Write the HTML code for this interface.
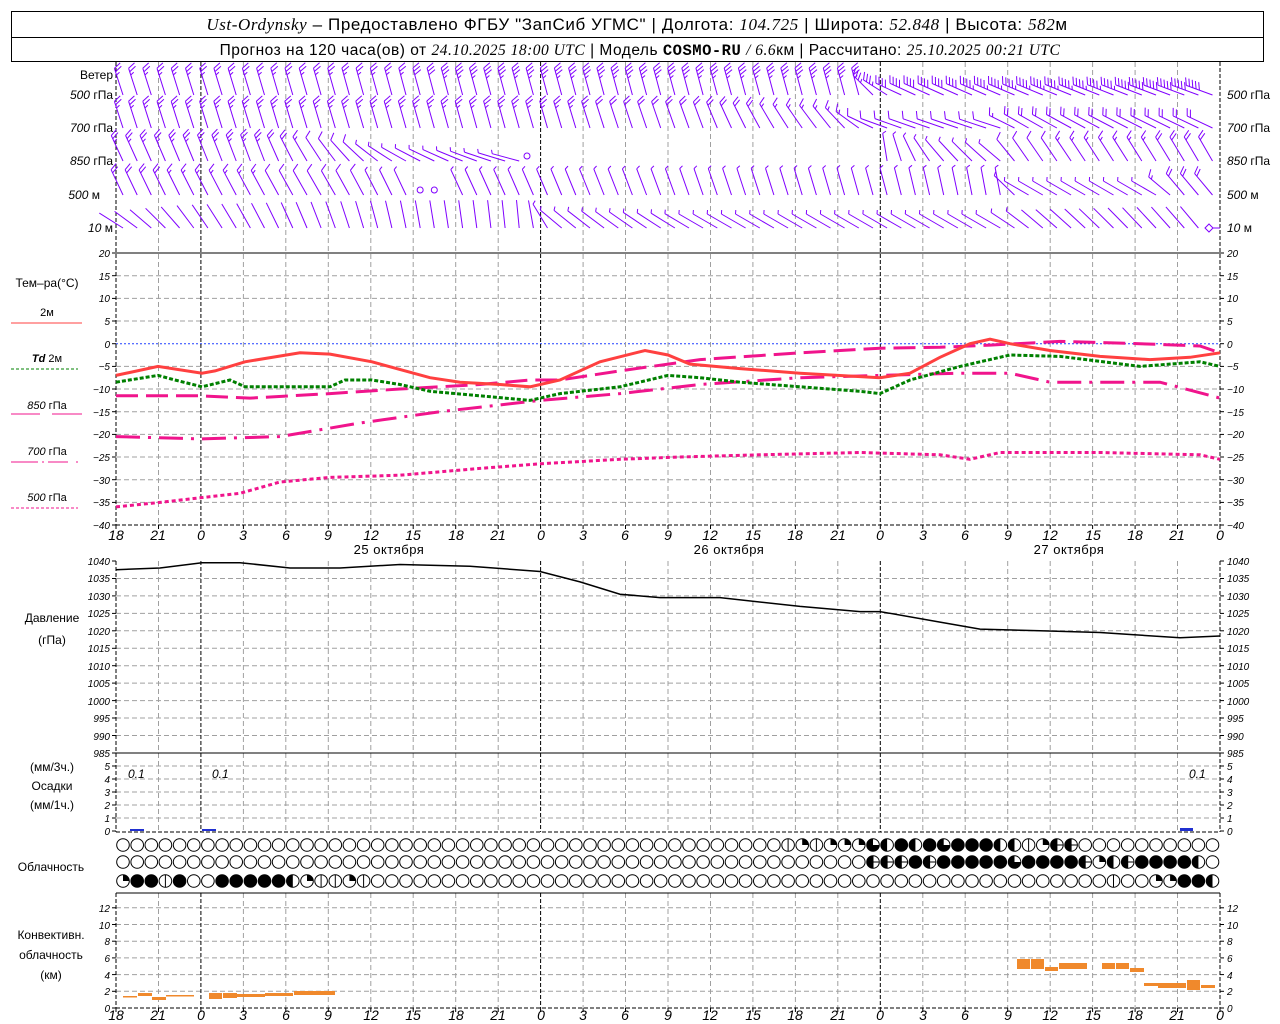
<!DOCTYPE html>
<html><head><meta charset="utf-8">
<style>
html,body{margin:0;padding:0;background:#fff;}
svg{display:block;font-family:"Liberation Sans",sans-serif;}
.ax{font-size:10px;font-style:italic;fill:#000;}
.lb{font-size:12px;fill:#000;}
.it{font-family:"Liberation Serif",serif;font-style:italic;}
</style></head>
<body>
<svg id="s" width="1280" height="1024" viewBox="0 0 1280 1024" xmlns="http://www.w3.org/2000/svg">
<rect x="0" y="0" width="1280" height="1024" fill="#fff"/>
<rect x="11.5" y="11.5" width="1252" height="50" fill="none" stroke="#000"/>
<line x1="11" y1="37.5" x2="1264" y2="37.5" stroke="#000"/>
<text x="637" y="30" text-anchor="middle" font-size="17" letter-spacing="0.6"><tspan class="it">Ust-Ordynsky</tspan> – Предоставлено ФГБУ "ЗапСиб УГМС" | Долгота: <tspan class="it">104.725</tspan> | Широта: <tspan class="it">52.848</tspan> | Высота: <tspan class="it">582</tspan>м</text>
<text x="640" y="55" text-anchor="middle" font-size="15.5" letter-spacing="0.5">Прогноз на 120 часа(ов) от <tspan class="it">24.10.2025 18:00 UTC</tspan> | Модель <tspan font-family="Liberation Mono,monospace" font-weight="bold">COSMO-RU</tspan> <tspan class="it">/ 6.6</tspan>км | Рассчитано: <tspan class="it">25.10.2025 00:21 UTC</tspan></text>

<g id="g"></g>

<g class="lb" font-size="11">
<text x="113" y="79" text-anchor="end" font-size="12">Ветер</text>
<text x="113" y="99" text-anchor="end"><tspan font-style="italic">500</tspan> гПа</text>
<text x="113" y="132" text-anchor="end"><tspan font-style="italic">700</tspan> гПа</text>
<text x="113" y="165" text-anchor="end"><tspan font-style="italic">850</tspan> гПа</text>
<text x="100" y="199" text-anchor="end"><tspan font-style="italic">500</tspan> м</text>
<text x="113" y="232" text-anchor="end"><tspan font-style="italic">10</tspan>   м</text>
<text x="1227" y="99"><tspan font-style="italic">500</tspan> гПа</text>
<text x="1227" y="132"><tspan font-style="italic">700</tspan> гПа</text>
<text x="1227" y="165"><tspan font-style="italic">850</tspan> гПа</text>
<text x="1227" y="199"><tspan font-style="italic">500</tspan> м</text>
<text x="1227" y="232"><tspan font-style="italic">10</tspan>   м</text>
</g>
<g class="lb">
<text x="47" y="287" text-anchor="middle">Тем–ра(°C)</text>
<text x="47" y="316" text-anchor="middle" font-size="11">2м</text>
<text x="47" y="362" text-anchor="middle" font-size="11"><tspan font-style="italic" font-weight="bold">Td</tspan>  2м</text>
<text x="47" y="409" text-anchor="middle" font-size="11"><tspan font-style="italic">850</tspan>  гПа</text>
<text x="47" y="455" text-anchor="middle" font-size="11"><tspan font-style="italic">700</tspan> гПа</text>
<text x="47" y="501" text-anchor="middle" font-size="11"><tspan font-style="italic">500</tspan> гПа</text>
<text x="52" y="622" text-anchor="middle">Давление</text>
<text x="52" y="644" text-anchor="middle">(гПа)</text>
<text x="52" y="771" text-anchor="middle">(мм/3ч.)</text>
<text x="52" y="790" text-anchor="middle">Осадки</text>
<text x="52" y="809" text-anchor="middle">(мм/1ч.)</text>
<text x="51" y="871" text-anchor="middle">Облачность</text>
<text x="51" y="939" text-anchor="middle">Конвективн.</text>
<text x="51" y="959" text-anchor="middle">облачность</text>
<text x="51" y="979" text-anchor="middle">(км)</text>
</g>
<g font-size="12" font-style="italic">
<text x="128" y="778">0.1</text><text x="212" y="778">0.1</text><text x="1189" y="778">0.1</text>
</g>
<line x1="11" y1="323" x2="82" y2="323" stroke="#ff4040" stroke-width="1"/>
<line x1="11" y1="369" x2="78" y2="369" stroke="#008000" stroke-dasharray="3,2"/>
<line x1="11" y1="414" x2="40" y2="414" stroke="#f0148c"/><line x1="52" y1="414" x2="82" y2="414" stroke="#f0148c"/>
<line x1="11" y1="462" x2="38" y2="462" stroke="#f0148c"/><line x1="42" y1="462" x2="44" y2="462" stroke="#f0148c"/><line x1="48" y1="462" x2="68" y2="462" stroke="#f0148c"/><line x1="76" y1="462" x2="78" y2="462" stroke="#f0148c"/>
<line x1="11" y1="508" x2="78" y2="508" stroke="#f0148c" stroke-dasharray="3,2"/>

<g class="ax" text-anchor="end">
<text x="110" y="257">20</text><text x="110" y="280">15</text><text x="110" y="302">10</text><text x="110" y="325">5</text><text x="110" y="348">0</text><text x="110" y="370">−5</text><text x="110" y="393">−10</text><text x="110" y="416">−15</text><text x="110" y="438">−20</text><text x="110" y="461">−25</text><text x="110" y="484">−30</text><text x="110" y="506">−35</text><text x="110" y="529">−40</text>
<text x="110" y="565">1040</text><text x="110" y="582">1035</text><text x="110" y="600">1030</text><text x="110" y="617">1025</text><text x="110" y="635">1020</text><text x="110" y="652">1015</text><text x="110" y="670">1010</text><text x="110" y="687">1005</text><text x="110" y="705">1000</text><text x="110" y="722">995</text><text x="110" y="740">990</text><text x="110" y="757">985</text>
<text x="110" y="770">5</text><text x="110" y="783">4</text><text x="110" y="796">3</text><text x="110" y="809">2</text><text x="110" y="822">1</text><text x="110" y="835">0</text>
<text x="110" y="912">12</text><text x="110" y="929">10</text><text x="110" y="945">8</text><text x="110" y="962">6</text><text x="110" y="979">4</text><text x="110" y="995">2</text><text x="110" y="1012">0</text>
</g>
<g class="ax">
<text x="1227" y="257">20</text><text x="1227" y="280">15</text><text x="1227" y="302">10</text><text x="1227" y="325">5</text><text x="1227" y="348">0</text><text x="1227" y="370">−5</text><text x="1227" y="393">−10</text><text x="1227" y="416">−15</text><text x="1227" y="438">−20</text><text x="1227" y="461">−25</text><text x="1227" y="484">−30</text><text x="1227" y="506">−35</text><text x="1227" y="529">−40</text>
<text x="1227" y="565">1040</text><text x="1227" y="582">1035</text><text x="1227" y="600">1030</text><text x="1227" y="617">1025</text><text x="1227" y="635">1020</text><text x="1227" y="652">1015</text><text x="1227" y="670">1010</text><text x="1227" y="687">1005</text><text x="1227" y="705">1000</text><text x="1227" y="722">995</text><text x="1227" y="740">990</text><text x="1227" y="757">985</text>
<text x="1227" y="770">5</text><text x="1227" y="783">4</text><text x="1227" y="796">3</text><text x="1227" y="809">2</text><text x="1227" y="822">1</text><text x="1227" y="835">0</text>
<text x="1227" y="912">12</text><text x="1227" y="929">10</text><text x="1227" y="945">8</text><text x="1227" y="962">6</text><text x="1227" y="979">4</text><text x="1227" y="995">2</text><text x="1227" y="1012">0</text>
</g>
<g font-size="14" font-style="italic" text-anchor="middle">
<text x="116" y="540">18</text><text x="158" y="540">21</text><text x="201" y="540">0</text><text x="243" y="540">3</text><text x="286" y="540">6</text><text x="328" y="540">9</text><text x="371" y="540">12</text><text x="413" y="540">15</text><text x="456" y="540">18</text><text x="498" y="540">21</text><text x="541" y="540">0</text><text x="583" y="540">3</text><text x="625" y="540">6</text><text x="668" y="540">9</text><text x="710" y="540">12</text><text x="753" y="540">15</text><text x="795" y="540">18</text><text x="838" y="540">21</text><text x="880" y="540">0</text><text x="923" y="540">3</text><text x="965" y="540">6</text><text x="1008" y="540">9</text><text x="1050" y="540">12</text><text x="1093" y="540">15</text><text x="1135" y="540">18</text><text x="1177" y="540">21</text><text x="1220" y="540">0</text>
<text x="116" y="1020">18</text><text x="158" y="1020">21</text><text x="201" y="1020">0</text><text x="243" y="1020">3</text><text x="286" y="1020">6</text><text x="328" y="1020">9</text><text x="371" y="1020">12</text><text x="413" y="1020">15</text><text x="456" y="1020">18</text><text x="498" y="1020">21</text><text x="541" y="1020">0</text><text x="583" y="1020">3</text><text x="625" y="1020">6</text><text x="668" y="1020">9</text><text x="710" y="1020">12</text><text x="753" y="1020">15</text><text x="795" y="1020">18</text><text x="838" y="1020">21</text><text x="880" y="1020">0</text><text x="923" y="1020">3</text><text x="965" y="1020">6</text><text x="1008" y="1020">9</text><text x="1050" y="1020">12</text><text x="1093" y="1020">15</text><text x="1135" y="1020">18</text><text x="1177" y="1020">21</text><text x="1220" y="1020">0</text>
</g>
<g font-size="13" text-anchor="middle" letter-spacing="0.5">
<text x="389" y="554">25 октября</text><text x="729" y="554">26 октября</text><text x="1069" y="554">27 октября</text>
</g>
</svg>
<script>
var G=document.getElementById("g"),out="";
function X(h){return 116+h*1104/78;}
function L(x1,y1,x2,y2,st){out+='<line x1="'+(+x1).toFixed(1)+'" y1="'+(+y1).toFixed(1)+'" x2="'+(+x2).toFixed(1)+'" y2="'+(+y2).toFixed(1)+'" '+st+'/>';}
var GR='stroke="#a0a0a0" stroke-dasharray="5,3"';
function hgrid(y){L(116,y,1220,y,GR);}
for(var v=15;v>=-35;v-=5){ if(v!==0) hgrid(343.7-v*4.533);}
for(var p=1035;p>985;p-=5) hgrid(561+(1040-p)*3.49);
for(var k=1;k<=5;k++) hgrid(831-k*13);
for(var k=1;k<=6;k++) hgrid(1008-k*16.7);
L(116,343.7,1220,343.7,'stroke="#2040ff" stroke-dasharray="2,2"');
var segs=[[62,525],[561,832],[893,1008]];
for(var k=0;k<=26;k++){var x=X(k*3);var day=(k%8==2)||k==0||k==26;
 segs.forEach(function(s){L(x,s[0],x,s[1],day?'stroke="#000" stroke-dasharray="4,2"':GR);});}
for(var k=0;k<=26;k++){var x=X(k*3);L(x,525,x,529,'stroke="#000"');L(x,1008,x,1012,'stroke="#000"');}
function ticks(ys){ys.forEach(function(y){L(112,y,116,y,'stroke="#000"');L(1220,y,1224,y,'stroke="#000"');});}
var t=[];for(var v=20;v>=-40;v-=5)t.push(343.7-v*4.533);for(var p=1040;p>=985;p-=5)t.push(561+(1040-p)*3.49);
for(var k=0;k<=5;k++)t.push(831-k*13);for(var k=0;k<=6;k++)t.push(1008-k*16.7);ticks(t);
L(116,253,1220,253,'stroke="#000"');L(116,753,1220,753,'stroke="#000"');L(116,893,1220,893,'stroke="#000"');
L(116,525,1220,525,'stroke="#000" stroke-dasharray="4,2"');L(116,1008,1220,1008,'stroke="#000" stroke-dasharray="4,2"');
L(116,832,1220,832,'stroke="#000" stroke-dasharray="4,2"');
function curve(pts,f,st){var s=pts.map(function(p){return p[0]+","+f(p[1]).toFixed(1);}).join(" ");out+='<polyline fill="none" points="'+s+'" '+st+'/>';}
var ty=function(v){return 343.7-v*4.533;};
curve([[116,-11.5],[200,-11.5],[250,-12],[330,-11],[400,-10],[480,-9],[530,-8],[560,-8],[620,-6],[700,-3.5],[800,-2],[880,-1],[940,-0.8],[990,-0.3],[1060,0.5],[1140,0],[1200,-0.5],[1220,-2]],ty,'stroke="#f0148c" stroke-width="3" stroke-dasharray="22,8"');
curve([[116,-20.5],[200,-21],[280,-20.5],[360,-17.5],[440,-15],[540,-12.5],[620,-11],[700,-9],[800,-7.5],[880,-7],[960,-6.5],[1010,-6.5],[1050,-8.5],[1100,-8.5],[1160,-8.5],[1220,-12]],ty,'stroke="#f0148c" stroke-width="3" stroke-dasharray="24,8,3,8"');
curve([[116,-36],[160,-35],[200,-34],[240,-33],[280,-30.5],[330,-29.5],[400,-29],[480,-27.5],[540,-26.5],[620,-25.5],[680,-25],[760,-24.5],[860,-24],[940,-24.5],[970,-25.5],[1000,-24],[1100,-24],[1200,-24.5],[1220,-25.5]],ty,'stroke="#f0148c" stroke-width="3" stroke-dasharray="4,3"');
curve([[116,-8.5],[158,-7],[175,-8],[202,-9.5],[230,-8],[245,-9.5],[330,-9.5],[345,-8],[372,-8],[400,-9],[430,-10.5],[480,-11.5],[530,-12.5],[560,-11],[620,-9.5],[668,-7],[700,-7.5],[740,-8.5],[800,-9.5],[860,-10.5],[880,-11],[910,-8],[960,-5],[1010,-2.5],[1060,-2.8],[1140,-5],[1200,-4],[1220,-5]],ty,'stroke="#008000" stroke-width="3" stroke-dasharray="4,2"');
curve([[116,-7],[158,-5],[202,-6.5],[215,-6],[245,-4],[300,-2],[330,-2.3],[372,-4],[430,-7.5],[460,-8.5],[500,-9],[530,-9.5],[560,-8],[600,-4],[645,-1.5],[668,-2.5],[690,-4.5],[740,-5.5],[800,-6.5],[880,-7.5],[910,-6.5],[940,-3],[970,0],[990,1],[1010,0],[1050,-1.5],[1100,-2.8],[1150,-3.5],[1190,-3],[1220,-2]],ty,'stroke="#ff4040" stroke-width="3"');
curve([[116,1037.5],[160,1038],[202,1039.5],[240,1039.5],[290,1038],[340,1038],[400,1039],[470,1038.5],[540,1037],[580,1034],[620,1030.5],[660,1029.5],[720,1029.5],[800,1027],[860,1025.5],[880,1025.5],[940,1022.5],[980,1020.5],[1040,1020],[1100,1019.5],[1180,1018],[1220,1018.5]],function(p){return 561+(1040-p)*3.49;},'stroke="#000" stroke-width="1.5"');
out+='<rect x="130" y="829" width="14" height="2" fill="#2030d0"/><rect x="202" y="829" width="14" height="2" fill="#2030d0"/><rect x="1180" y="828" width="13" height="3" fill="#2030d0"/>';
[[123,996,14,1.5],[138,993,14,3],[152,997,14,3],[166,995,28,1.5],[209,993,13,6],[223,993,14,5],[237,994,28,3],[265,993,28,3],[294,991,13,4],[307,991,28,4],
[1017,959,13,10],[1031,959,13,10],[1045,967,13,4],[1059,963,28,6],[1102,963,13,6],[1116,963,13,6],[1130,968,14,4],[1144,983,28,3],[1158,983,28,5],[1187,980,13,10],[1201,985,14,3]].forEach(function(r){out+='<rect x="'+r[0]+'" y="'+r[1]+'" width="'+r[2]+'" height="'+r[3]+'" fill="#f0892c"/>';});
function pad(s){while(s.length<78)s+="o";return s.slice(0,78);}
var rows=[pad("ooooooooooooooooooooooooooooooooooooooooooooooovqvqqqtHfHftfffHHvqxxoooooooooooo"),
pad("oooooooooooooooooooooooooooooooooooooooooooooooooooooxxxfxffffftffffxqHxffffHov"),
pad("qffvfoofffffHqvvqvoooooooooooooooooooooooooooooooooooooooooooooooooooovooqqffHoq")];
var cy=[845,862,881];
rows.forEach(function(s,r){for(var i=0;i<78;i++){var xn=+(123+i*14.15).toFixed(1),y=cy[r],R=6.3,c=s[i];
 var st='stroke="#000" stroke-width="1"';
 if(c=="f"){out+='<circle cx="'+xn+'" cy="'+y+'" r="'+R+'" fill="#000" '+st+'/>';continue;}
 out+='<circle cx="'+xn+'" cy="'+y+'" r="'+R+'" fill="#fff" '+st+'/>';
 if(c=="v"||c=="x")L(xn,y-R,xn,y+R,'stroke="#000"');
 if(c=="x")L(xn-R,y,xn+R,y,'stroke="#000"');
 if(c=="q")out+='<path d="M'+xn+' '+y+'V'+(y-R)+'A'+R+' '+R+' 0 0 1 '+(xn+R).toFixed(1)+' '+y+'Z" fill="#000"/>';
 if(c=="H"||c=="x")out+='<path d="M'+xn+' '+(y-R)+'A'+R+' '+R+' 0 0 0 '+xn+' '+(y+R)+'Z" fill="#000"/>';
 if(c=="t")out+='<path d="M'+xn+' '+y+'H'+(xn+R).toFixed(1)+'A'+R+' '+R+' 0 1 1 '+xn+' '+(y-R)+'Z" fill="#000"/>';
}});
var WC='stroke="#8000ff" stroke-width="1" fill="none"';
function barb(x,yb,a,sp){
 if(sp<=0){out+='<circle cx="'+x+'" cy="'+(yb-5)+'" r="3" '+WC+'/>';return;}
 var r=a*Math.PI/180,dx=Math.sin(r),dy=-Math.cos(r),len=28;
 var tx=x+dx*len,ty=yb+dy*len;L(x,yb,tx,ty,WC);
 var th=65*Math.PI/180,fx=dx*Math.cos(th)-dy*Math.sin(th),fy=dx*Math.sin(th)+dy*Math.cos(th);
 var n=Math.round(sp/5),pos=0;
 while(n>0){var px=tx-dx*pos,py=ty-dy*pos,fl=n>=2?8:4;L(px,py,px+fx*fl,py+fy*fl,WC);n-=(n>=2?2:1);pos+=3.5;}
}
function interp(keys,x){if(x<=keys[0][0])return keys[0].slice(1);for(var i=0;i<keys.length-1;i++){if(x>=keys[i][0]&&x<=keys[i+1][0]){var t=(x-keys[i][0])/(keys[i+1][0]-keys[i][0]);return [keys[i][1]+t*(keys[i+1][1]-keys[i][1]),keys[i][2]+t*(keys[i+1][2]-keys[i][2])];}}return keys[keys.length-1].slice(1);}
var W=[
 [95,[[116,-18,25],[400,-15,25],[460,-15,35],[860,-15,35],[875,-50,35],[900,-65,40],[1220,-70,50]]],
 [128,[[116,-18,25],[500,-15,25],[700,-20,20],[840,-40,15],[880,-70,10],[1000,-72,10],[1020,-60,20],[1220,-65,20]]],
 [161,[[116,-25,25],[260,-20,25],[330,-35,10],[400,-60,5],[520,-75,5]],116,525,[[880,-5,5],[940,-40,5],[1000,-50,5],[1020,-35,10],[1220,-30,20]]],
 [195,[[116,-25,20],[330,-30,10],[410,-25,5]],116,410,[[455,-25,5],[880,-15,5],[1000,-10,5],[1020,-60,5],[1160,-60,5],[1180,-40,20],[1220,-40,20]]],
 [228,[[116,-60,0.1],[200,-35,0.1],[420,-10,0.1],[530,-5,0.1],[560,-50,5],[700,-60,5],[1000,-60,5],[1040,-50,2],[1200,-40,2]]]
];
W.forEach(function(row){var yb=row[0];
 for(var i=0;i<78;i++){var x=123+i*14.15,k=row[1];
  if(row.length>2){ if(x>row[3]){k=row[4];} }
  if(yb==161&&x>530&&x<880){ if(Math.abs(x-527)<8) barb(527,yb,0,0); continue;}
  if(yb==195&&x>410&&x<455){ if(i==21||i==22) barb(x,yb,0,0); continue;}
  if(yb==228&&x>1205){out+='<path d="M1205 228l4-4 4 4-4 4z" '+WC+'/>';L(1213,228,1220,228,WC);continue;}
  var v=interp(k,x);barb(x,yb,v[0],v[1]<1?1:v[1]);}
});
G.innerHTML=out;
</script>
</body></html>
